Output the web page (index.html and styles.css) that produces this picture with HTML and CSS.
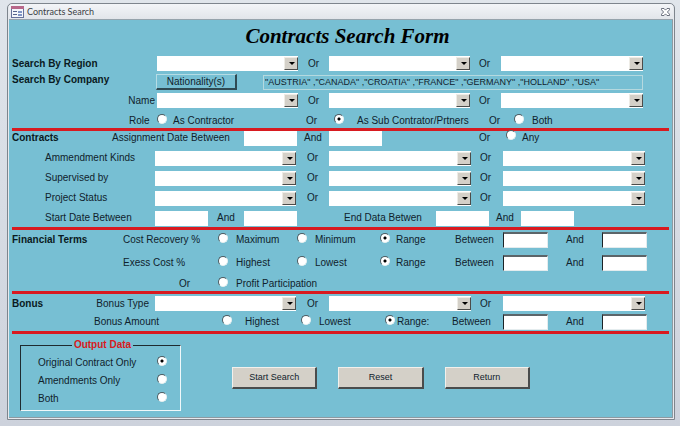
FILE: index.html
```html
<!DOCTYPE html>
<html lang="en">
<head>
    <meta charset="UTF-8">
    <meta name="viewport" content="width=device-width, initial-scale=1.0">
    <title>Contracts Search</title>
    <link rel="stylesheet" href="styles.css">
</head>
<body>
<div class="window">
    <div class="titlebar">
        <svg class="form-icon" width="13" height="12" viewBox="0 0 13 12">
            <rect x="0.5" y="0.5" width="12" height="11" fill="#f4f6fb" stroke="#66719a"/>
            <rect x="0" y="0" width="13" height="3" fill="#b8688a"/>
            <path d="M2 5.5h4M2 8.5h4" stroke="#56648c"/>
            <rect x="7" y="5" width="4" height="2" fill="#7f94c4"/>
            <rect x="7" y="8" width="4" height="2" fill="#7f94c4"/>
        </svg>
        <span>Contracts Search</span>
        <button type="button" class="close" aria-label="Close">
            <svg width="9" height="8" viewBox="0 0 9 8">
                <path d="M.5 .5h2.500l1.500 1.600L6 .5h2.500v1.300L6.400 4l2.100 2.200v1.300H6L4.500 5.900 3 7.500H.5V6.200L2.600 4 .5 1.800z" fill="#fff" stroke="#5c6270" stroke-width=".9"/>
            </svg>
        </button>
    </div>

    <form class="form">
        <h1>Contracts Search Form</h1>

        <!-- Region / company -->
        <section class="search">
            <div class="row region">
                <label class="heading" for="region1">Search By Region</label>
                <span class="combo"><select id="region1"><option></option></select></span>
                <span class="or">Or</span>
                <span class="combo"><select aria-label="Region 2"><option></option></select></span>
                <span class="or near">Or</span>
                <span class="combo"><select aria-label="Region 3"><option></option></select></span>
            </div>
            <div class="row company">
                <label class="heading top" for="countries">Search By Company</label>
                <button type="button" class="nationality">Nationality(s)</button>
                <span></span>
                <input type="text" class="countries" id="countries" value='"AUSTRIA" ,"CANADA" ,"CROATIA" ,"FRANCE" ,"GERMANY" ,"HOLLAND" ,"USA"' readonly>
            </div>
            <div class="row region">
                <label class="right" for="name1">Name</label>
                <span class="combo"><select id="name1"><option></option></select></span>
                <span class="or">Or</span>
                <span class="combo"><select aria-label="Name 2"><option></option></select></span>
                <span class="or near">Or</span>
                <span class="combo"><select aria-label="Name 3"><option></option></select></span>
            </div>
            <div class="row role">
                <span></span>
                <span>Role</span>
                <label class="radio close-text"><input type="radio" name="role">As Contractor</label>
                <span>Or</span>
                <label class="radio wide"><input type="radio" name="role" checked>As Sub Contrator/Prtners</label>
                <span>Or</span>
                <label class="radio"><input type="radio" name="role">Both</label>
            </div>
        </section>

        <!-- Contracts -->
        <section class="contracts">
            <div class="row assignment">
                <span class="heading">Contracts</span>
                <label for="assign1">Assignment Date Between</label>
                <input type="text" id="assign1">
                <label class="or" for="assign2">And</label>
                <input type="text" id="assign2">
                <span></span>
                <span>Or</span>
                <label class="radio close-text"><input type="radio" name="assign">Any</label>
            </div>
            <div class="row combos">
                <label class="indent" for="kind1">Ammendment Kinds</label>
                <span class="combo"><select id="kind1"><option></option></select></span>
                <span class="or">Or</span>
                <span class="combo"><select aria-label="Ammendment Kind 2"><option></option></select></span>
                <span class="or near">Or</span>
                <span class="combo"><select aria-label="Ammendment Kind 3"><option></option></select></span>
            </div>
            <div class="row combos">
                <label class="indent" for="super1">Supervised by</label>
                <span class="combo"><select id="super1"><option></option></select></span>
                <span class="or">Or</span>
                <span class="combo"><select aria-label="Supervised by 2"><option></option></select></span>
                <span class="or near">Or</span>
                <span class="combo"><select aria-label="Supervised by 3"><option></option></select></span>
            </div>
            <div class="row combos">
                <label class="indent" for="status1">Project Status</label>
                <span class="combo"><select id="status1"><option></option></select></span>
                <span class="or">Or</span>
                <span class="combo"><select aria-label="Project Status 2"><option></option></select></span>
                <span class="or near">Or</span>
                <span class="combo"><select aria-label="Project Status 3"><option></option></select></span>
            </div>
            <div class="row dates">
                <label class="indent" for="start1">Start Date Between</label>
                <input type="text" id="start1">
                <label class="or" for="start2">And</label>
                <input type="text" id="start2">
                <span></span>
                <label for="end1">End Data Betwen</label>
                <input type="text" id="end1">
                <label class="or" for="end2">And</label>
                <input type="text" id="end2">
            </div>
        </section>

        <!-- Financial terms -->
        <section class="financial">
            <div class="row terms">
                <span class="heading">Financial Terms</span>
                <span>Cost Recovery %</span>
                <label class="radio"><input type="radio" name="recovery">Maximum</label>
                <label class="radio"><input type="radio" name="recovery">Minimum</label>
                <label class="radio close-text"><input type="radio" name="recovery" checked>Range</label>
                <label for="rec1">Between</label>
                <input type="text" class="sunken" id="rec1">
                <label class="or" for="rec2">And</label>
                <input type="text" class="sunken" id="rec2">
            </div>
            <div class="row terms">
                <span></span>
                <span>Exess Cost %</span>
                <label class="radio"><input type="radio" name="excess">Highest</label>
                <label class="radio"><input type="radio" name="excess">Lowest</label>
                <label class="radio close-text"><input type="radio" name="excess" checked>Range</label>
                <label for="exc1">Between</label>
                <input type="text" class="sunken" id="exc1">
                <label class="or" for="exc2">And</label>
                <input type="text" class="sunken" id="exc2">
            </div>
            <div class="row terms">
                <span></span>
                <span class="profit-or">Or</span>
                <label class="radio"><input type="radio" name="profit">Profit Participation</label>
            </div>
        </section>

        <!-- Bonus -->
        <section class="bonus">
            <div class="row combos">
                <div class="bonus-type">
                    <span class="heading">Bonus</span>
                    <label for="bonus1">Bonus Type</label>
                </div>
                <span class="combo"><select id="bonus1"><option></option></select></span>
                <span class="or">Or</span>
                <span class="combo"><select aria-label="Bonus Type 2"><option></option></select></span>
                <span class="or near">Or</span>
                <span class="combo"><select aria-label="Bonus Type 3"><option></option></select></span>
            </div>
            <div class="row amount">
                <span></span>
                <span>Bonus Amount</span>
                <label class="radio wide"><input type="radio" name="amount">Highest</label>
                <label class="radio"><input type="radio" name="amount">Lowest</label>
                <label class="radio tight"><input type="radio" name="amount" checked>Range:</label>
                <label for="amt1">Between</label>
                <input type="text" class="sunken" id="amt1">
                <label class="or" for="amt2">And</label>
                <input type="text" class="sunken" id="amt2">
            </div>
        </section>

        <div class="bottom">
            <fieldset class="output">
                <legend>Output Data</legend>
                <label>Original Contract Only<input type="radio" name="output" checked></label>
                <label>Amendments Only<input type="radio" name="output"></label>
                <label>Both<input type="radio" name="output"></label>
            </fieldset>
            <div class="actions">
                <button type="button">Start Search</button>
                <button type="reset">Reset</button>
                <button type="button">Return</button>
            </div>
        </div>
    </form>
</div>
</body>
</html>
```

FILE: styles.css
```css
* {
    box-sizing: border-box;
}

body {
    margin: 0;
    padding: 3px 5px 6px 7px;
    min-height: 100vh;
    background: linear-gradient(#e0e5eb, #cdd2dc);
    font-family: "Liberation Sans", Arial, sans-serif;
    font-size: 10px;
    line-height: 12px;
    color: #10222c;
}

.window {
    border: 1px solid #7e858d;
    border-radius: 5px 5px 0 0;
    background-color: #e6e9ee;
    padding: 0 1px 1px;
}

.titlebar {
    display: flex;
    align-items: center;
    gap: 3px;
    height: 16px;
    padding: 0 3px 0 2px;
    background: linear-gradient(#f3f5f8, #e2e5ea);
    border-bottom: 1px solid #96a3ac;
    border-radius: 4px 4px 0 0;
    font-family: Lato, "Open Sans", sans-serif;
    font-size: 9px;
    color: #3c3f45;
}

.close {
    display: flex;
    margin-left: auto;
    padding: 0;
    border: none;
    background: none;
}

.form {
    background-color: #77bfd3;
    border-right: 1px solid #8d9aa2;
    border-bottom: 1px solid #8d9aa2;
    padding: 0 3px 6px;
}

h1 {
    margin: 0 0 0 14px;
    font-family: "Liberation Serif", "Times New Roman", serif;
    font-size: 21px;
    font-style: italic;
    line-height: 32px;
    padding-bottom: 4px;
    text-align: center;
    color: #000;
}

section {
    display: flex;
    flex-direction: column;
    border-bottom: 3px solid #d81a20;
}

.search {
    gap: 3px;
    padding-bottom: 1px;
}

.contracts {
    gap: 5px;
    padding-bottom: 1px;
}

.financial {
    gap: 7px;
    padding: 2px 0 1px;
}

.bonus {
    gap: 3px;
    padding: 2px 0 1px;
}

/* rows */
.row {
    display: grid;
    align-items: center;
    white-space: nowrap;
}

.row > * {
    min-width: 0;
}

.region {
    grid-template-columns: 145fr 141fr 31fr 141fr 31fr 142fr 26fr;
}

.company {
    grid-template-columns: 144fr 81fr 26fr 380fr 26fr;
}

.role {
    grid-template-columns: 117fr 28fr 149fr 28fr 155fr 25fr 155fr;
    align-items: end;
    min-height: 16px;
}

.assignment {
    grid-template-columns: 100fr 132fr 53fr 32fr 53fr 97fr 27fr 163fr;
}

.combos {
    grid-template-columns: 143fr 141fr 33fr 142fr 32fr 142fr 24fr;
}

.dates {
    grid-template-columns: 143fr 53fr 36fr 53fr 47fr 92fr 53fr 32fr 53fr 95fr;
}

.terms {
    grid-template-columns: 111fr 95fr 79fr 83fr 75fr 48fr 45fr 54fr 45fr 22fr;
}

.amount {
    grid-template-columns: 82fr 128fr 79fr 84fr 67fr 51fr 45fr 54fr 45fr 22fr;
}

/* captions sit a little above the middle of their boxes */
.contracts label,
.contracts span {
    margin-bottom: 2px;
}

.contracts .combo {
    margin-bottom: 0;
}

.heading {
    font-weight: bold;
    color: #0a1a22;
}

.top {
    align-self: start;
}

.right {
    text-align: right;
    padding-right: 2px;
}

.indent {
    padding-left: 33px;
}

.or {
    text-align: center;
}

.near {
    text-align: left;
    padding-left: 9px;
}

.profit-or {
    text-align: right;
    padding-right: 28px;
}

.bonus-type {
    display: flex;
    justify-content: space-between;
    padding-right: 6px;
}

/* controls */
input, select, button {
    font-family: inherit;
    font-size: inherit;
    line-height: inherit;
    color: inherit;
    border-radius: 0;
}

input[type="text"] {
    width: 100%;
    height: 15px;
    margin: 0;
    padding: 0 1px;
    border: none;
    background-color: #fff;
}

input[type="text"].sunken {
    height: 16px;
    border: 1px solid #e4ecee;
    border-top: 2px solid #5c6569;
    border-left-color: #1c2326;
}

input[type="text"].countries {
    border: 1px solid #b5d9df;
    background-color: transparent;
    font-size: 9px;
}

.combo {
    position: relative;
    display: flex;
}

.combo select {
    appearance: none;
    width: 100%;
    height: 15px;
    margin: 0;
    padding: 0 13px 0 2px;
    border: none;
    background-color: #fff;
}

/* arrow button drawn over the select */
.combo::before {
    content: "";
    position: absolute;
    top: 1px;
    right: 0;
    bottom: 1px;
    width: 12px;
    background-color: #d4d0c8;
    border: 1px solid #eeece6;
    border-right-color: #4c4c4a;
    border-bottom-color: #4c4c4a;
    pointer-events: none;
}

.combo::after {
    content: "";
    position: absolute;
    top: 6px;
    right: 3px;
    border: 3px solid transparent;
    border-top-color: #000;
    border-bottom: none;
    pointer-events: none;
}

input[type="radio"] {
    appearance: none;
    flex: none;
    width: 10px;
    height: 10px;
    margin: 0 0 5px;
    border: 1px solid #e6eff0;
    border-top-color: #4a5a60;
    border-left-color: #4a5a60;
    border-radius: 50%;
    background-color: #fff;
}

input[type="radio"]:checked {
    background-image: radial-gradient(circle, #000 0, #000 1px, transparent 2px);
}

.radio {
    display: flex;
    align-items: center;
    gap: 8px;
    height: 12px;
}

.radio.close-text {
    gap: 6px;
}

.radio.tight {
    gap: 2px;
}

.radio.wide {
    gap: 13px;
}

button {
    padding: 0;
    text-align: center;
}

.nationality {
    height: 16px;
    background-color: #77bfd3;
    border: 1px solid #b5dce5;
    border-right: 2px solid #2f4a53;
    border-bottom: 2px solid #2f4a53;
}

/* bottom area */
.bottom {
    display: grid;
    grid-template-columns: 161fr 51fr 298fr 139fr;
    padding: 5px 0 0 8px;
}

.output {
    display: flex;
    flex-direction: column;
    gap: 6px;
    min-width: 0;
    margin: 0;
    padding: 6px 13px 5px 17px;
    border: 1px solid #f0f8fa;
    border-top-color: #1e2a2f;
    border-left-color: #1e2a2f;
}

.output legend {
    margin: 0 auto;
    padding: 0 2px;
    font-weight: bold;
    color: #d81a20;
}

.output label {
    display: flex;
    align-items: center;
    justify-content: space-between;
    height: 12px;
}

.actions {
    grid-column: 3;
    align-self: center;
    display: grid;
    grid-template-columns: 1fr 1fr 1fr;
    gap: 21px;
    padding-top: 5px;
}

.actions button {
    height: 22px;
    background-color: #d4d0c8;
    border: 1px solid #f2f0ec;
    border-right: 2px solid #4a4c4c;
    border-bottom: 2px solid #4a4c4c;
    font-size: 9px;
}
```
